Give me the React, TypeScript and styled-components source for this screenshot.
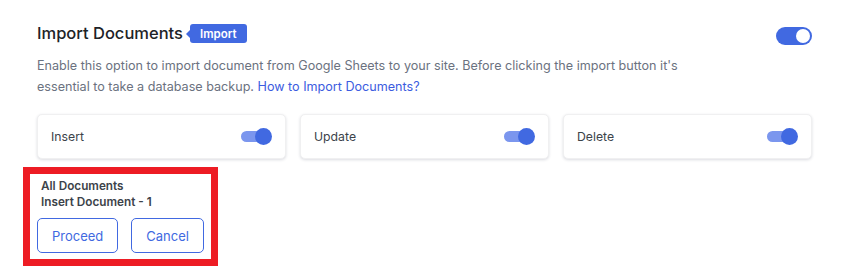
import React from "react";
import styled, { createGlobalStyle } from "styled-components";

const GlobalStyle = createGlobalStyle`
  html, body { margin: 0; padding: 0; background: #ffffff; }
  body { font-family: Inter, "Noto Sans", sans-serif; -webkit-font-smoothing: antialiased; }
  * { box-sizing: border-box; }
`;

const Page = styled.div`
  padding: 24px 37px 0 37px;
  width: 849px;
`;

const Header = styled.div`
  display: flex;
  align-items: center;
  justify-content: space-between;
  height: 19px;
`;

const TitleGroup = styled.div`
  display: flex;
  align-items: center;
  gap: 7px;
`;

const Title = styled.h2`
  margin: 0;
  font-size: 16.5px;
  font-weight: 500;
  color: #1d2327;
  line-height: 19px;
`;

const Badge = styled.span`
  position: relative;
  display: inline-flex;
  align-items: center;
  height: 19px;
  padding: 0 10px;
  background: #4169e1;
  color: #ffffff;
  font-size: 11.5px;
  font-weight: 600;
  border-radius: 3px;
  &::before {
    content: "";
    position: absolute;
    left: -4px;
    top: 50%;
    transform: translateY(-50%);
    border-top: 4px solid transparent;
    border-bottom: 4px solid transparent;
    border-right: 4px solid #4169e1;
  }
`;

const MainToggle = styled.div<{ $on: boolean }>`
  position: relative;
  width: 36px;
  height: 18px;
  border-radius: 9px;
  background: ${(p) => (p.$on ? "#4169e1" : "#c3c4c7")};
  margin-top: 4px;
  &::after {
    content: "";
    position: absolute;
    top: 2px;
    left: ${(p) => (p.$on ? "20px" : "2px")};
    width: 14px;
    height: 14px;
    border-radius: 50%;
    background: #ffffff;
  }
`;

const Description = styled.p`
  margin: 12px 0 0 0;
  font-size: 12.6px;
  line-height: 21px;
  color: #6b7280;
  max-width: 670px;
`;

const Link = styled.a`
  color: #3c5ce0;
  text-decoration: none;
`;

const CardGrid = styled.div`
  display: grid;
  grid-template-columns: repeat(3, 249px);
  gap: 14px;
  margin-top: 17px;
`;

const Card = styled.div`
  height: 45px;
  display: flex;
  align-items: center;
  justify-content: space-between;
  padding: 0 13px;
  background: #ffffff;
  border-radius: 5px;
  border: 1px solid #f0f0f1;
  box-shadow: 0 1px 3px rgba(30, 40, 70, 0.16);
`;

const CardLabel = styled.span`
  font-size: 12.25px;
  color: #3c434a;
`;

const SmallSwitch = styled.div`
  position: relative;
  width: 31px;
  height: 17px;
  &::before {
    content: "";
    position: absolute;
    left: 0;
    top: 3px;
    width: 28px;
    height: 11px;
    border-radius: 6px;
    background: #7b96ee;
  }
  &::after {
    content: "";
    position: absolute;
    right: 0;
    top: 0;
    width: 17px;
    height: 17px;
    border-radius: 50%;
    background: #4169e1;
  }
`;

const ConfirmBox = styled.div`
  display: inline-block;
  margin: 8px 0 0 -14px;
  border: 7px solid #ed1c24;
  padding: 4px 7px 6px 7px;
  background: #ffffff;
`;

const InfoLine = styled.div`
  margin-left: 4px;
  font-size: 11.75px;
  font-weight: 600;
  line-height: 16px;
  color: #3c434a;
`;

const ButtonRow = styled.div`
  display: flex;
  gap: 13px;
  margin-top: 8px;
`;

const OutlineButton = styled.button`
  height: 35px;
  padding: 0 14px;
  border: 1px solid #4169e1;
  border-radius: 5px;
  background: #ffffff;
  color: #4169e1;
  font-family: Inter, "Noto Sans", sans-serif;
  font-size: 13px;
  cursor: pointer;
`;

const options = ["Insert", "Update", "Delete"];

export default function App() {
  return (
    <>
      <GlobalStyle />
      <Page>
        <Header>
          <TitleGroup>
            <Title>Import Documents</Title>
            <Badge>Import</Badge>
          </TitleGroup>
          <MainToggle $on />
        </Header>
        <Description>
          Enable this option to import document from Google Sheets to your site. Before clicking the import button it's
          essential to take a database backup. <Link href="#">How to Import Documents?</Link>
        </Description>
        <CardGrid>
          {options.map((o) => (
            <Card key={o}>
              <CardLabel>{o}</CardLabel>
              <SmallSwitch />
            </Card>
          ))}
        </CardGrid>
        <ConfirmBox>
          <InfoLine>All Documents</InfoLine>
          <InfoLine>Insert Document - 1</InfoLine>
          <ButtonRow>
            <OutlineButton>Proceed</OutlineButton>
            <OutlineButton>Cancel</OutlineButton>
          </ButtonRow>
        </ConfirmBox>
      </Page>
    </>
  );
}
